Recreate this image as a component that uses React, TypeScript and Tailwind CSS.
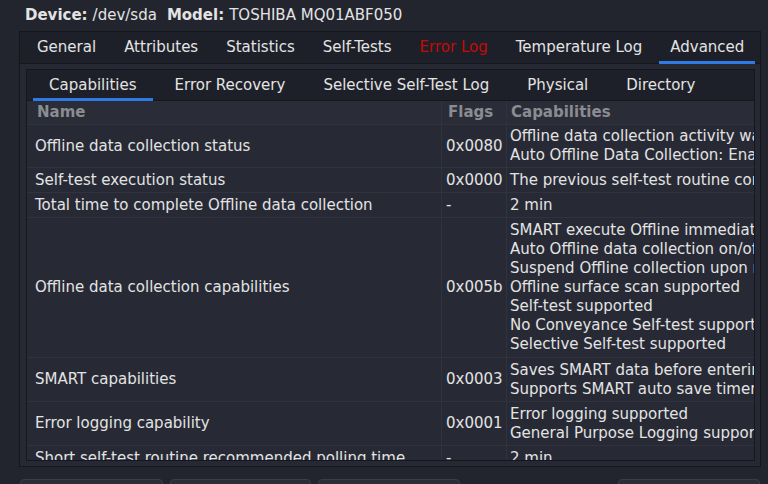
import React from "react";

const mainTabs = ["General", "Attributes", "Statistics", "Self-Tests", "Error Log", "Temperature Log", "Advanced"];
const subTabs = ["Capabilities", "Error Recovery", "Selective Self-Test Log", "Physical", "Directory"];

type Row = { name: string; flags: string; caps: string[]; h: number };

const rows: Row[] = [
  {
    name: "Offline data collection status",
    flags: "0x0080",
    caps: ["Offline data collection activity was never started.", "Auto Offline Data Collection: Enabled."],
    h: 43,
  },
  { name: "Self-test execution status", flags: "0x0000", caps: ["The previous self-test routine completed without error."], h: 25 },
  { name: "Total time to complete Offline data collection", flags: "-", caps: ["2 min"], h: 25 },
  {
    name: "Offline data collection capabilities",
    flags: "0x005b",
    caps: [
      "SMART execute Offline immediate.",
      "Auto Offline data collection on/off support.",
      "Suspend Offline collection upon new command.",
      "Offline surface scan supported",
      "Self-test supported",
      "No Conveyance Self-test supported",
      "Selective Self-test supported",
    ],
    h: 140,
  },
  {
    name: "SMART capabilities",
    flags: "0x0003",
    caps: ["Saves SMART data before entering power-saving mode.", "Supports SMART auto save timer."],
    h: 44,
  },
  {
    name: "Error logging capability",
    flags: "0x0001",
    caps: ["Error logging supported", "General Purpose Logging supported"],
    h: 44,
  },
  { name: "Short self-test routine recommended polling time", flags: "-", caps: ["2 min"], h: 25 },
];

export default function App() {
  return (
    <div
      className="w-[768px] h-[484px] overflow-hidden bg-[#23252e] text-[15px] text-[#e3e3e3] flex flex-col"
      style={{ fontFamily: '"DejaVu Sans", sans-serif' }}
    >
      {/* Device header */}
      <div className="h-[31px] shrink-0 pl-[25px] flex items-center whitespace-nowrap">
        <span className="font-bold">Device:</span>
        <span className="ml-[5px]">/dev/sda</span>
        <span className="font-bold ml-[10px]">Model:</span>
        <span className="ml-[5px]">TOSHIBA MQ01ABF050</span>
      </div>

      {/* Outer tab widget */}
      <div className="ml-[19px] w-[742px] h-[436px] shrink-0 border border-[#16171d] bg-[#262833] flex flex-col">
        <div className="h-[32px] shrink-0 bg-[#1e2029] border-b border-[#17181e] flex items-stretch pl-[6px] gap-[6px]">
          {mainTabs.map((t) => (
            <div
              key={t}
              className={
                "relative px-[11px] flex items-center whitespace-nowrap " +
                (t === "Error Log" ? "text-[#c40a0a]" : "")
              }
            >
              {t}
              {t === "Advanced" && <div className="absolute left-0 right-0 bottom-[-1px] h-[3px] bg-[#2f7ae5]" />}
            </div>
          ))}
        </div>

        <div className="flex-1 min-h-0 pt-[5px] pl-[6px] pr-[5px] pb-[5px] flex">
          <div className="flex-1 min-h-0 flex flex-col border border-[#16171d] bg-[#272a35] overflow-hidden">
            {/* Sub tabs */}
            <div className="h-[31px] bg-[#1e2029] border-b border-[#16171d] flex items-stretch pl-[6px] gap-[6px] shrink-0">
              {subTabs.map((t, i) => (
                <div key={t} className="relative px-[16px] flex items-center whitespace-nowrap">
                  {t}
                  {i === 0 && <div className="absolute left-0 right-0 bottom-[-1px] h-[3px] bg-[#2f7ae5]" />}
                </div>
              ))}
            </div>

            {/* Table */}
            <div className="flex-1 min-h-0 overflow-hidden">
              <div className="flex h-[24px] bg-[#2a2d38] border-b border-[#30333e] font-bold text-[#8b8c91] whitespace-nowrap">
                <div className="w-[414px] shrink-0 pl-[10px] flex items-center">Name</div>
                <div className="w-[65px] shrink-0 pl-[6px] flex items-center border-l border-[#30333e]">Flags</div>
                <div className="flex-1 pl-[4px] flex items-center border-l border-[#30333e]">Capabilities</div>
              </div>
              {rows.map((r) => (
                <div
                  key={r.name}
                  className="flex border-b border-[#30333e] whitespace-nowrap shrink-0"
                  style={{ height: r.h }}
                >
                  <div className="w-[414px] shrink-0 pl-[8px] flex items-center">{r.name}</div>
                  <div className="w-[65px] shrink-0 pl-[4px] flex items-center border-l border-[#30333e]">
                    {r.flags}
                  </div>
                  <div className="flex-1 min-w-0 pl-[3px] flex flex-col justify-center leading-[19px] overflow-hidden border-l border-[#30333e]">
                    {r.caps.map((c) => (
                      <div key={c}>{c}</div>
                    ))}
                  </div>
                </div>
              ))}
            </div>
          </div>
        </div>
      </div>

      {/* Bottom buttons */}
      <div className="mt-[12px] shrink-0 flex pl-[20px] gap-[7px]">
        <div className="w-[143px] h-[30px] rounded-[4px] border border-[#3a3d49] bg-[#2a2c36]" />
        <div className="w-[141px] h-[30px] rounded-[4px] border border-[#3a3d49] bg-[#2a2c36]" />
        <div className="w-[142px] h-[30px] rounded-[4px] border border-[#3a3d49] bg-[#2a2c36]" />
        <div className="ml-auto mr-[8px] w-[142px] h-[30px] rounded-[4px] border border-[#3a3d49] bg-[#2a2c36]" />
      </div>
    </div>
  );
}
